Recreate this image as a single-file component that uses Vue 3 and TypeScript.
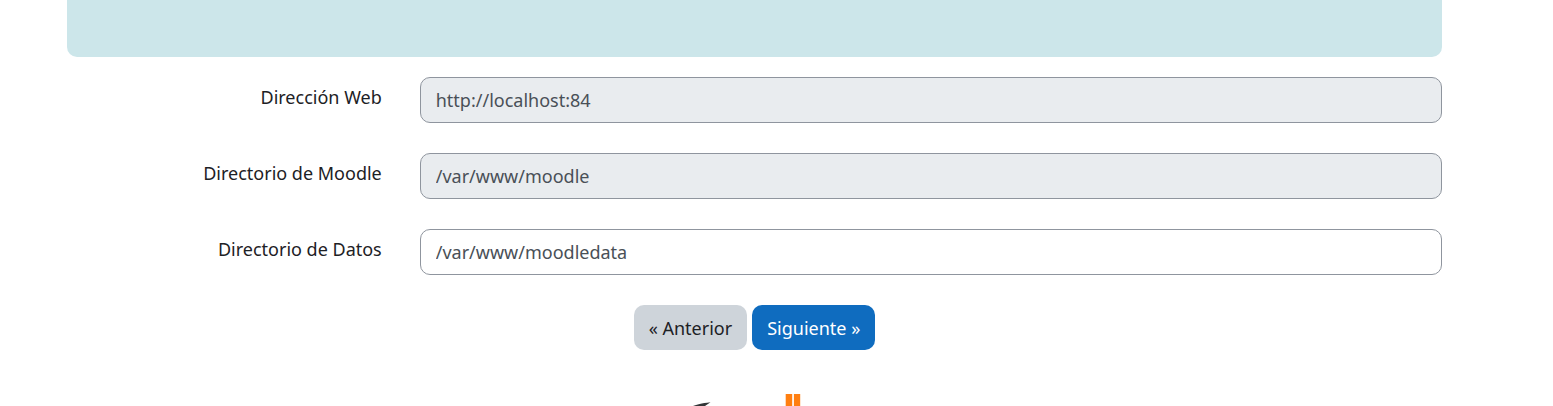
<script setup lang="ts">
import { reactive } from 'vue'

interface Field {
  id: string
  label: string
  value: string
  locked: boolean
}

const fields = reactive<Field[]>([
  { id: 'wwwroot', label: 'Dirección Web', value: 'http://localhost:84', locked: true },
  { id: 'dirroot', label: 'Directorio de Moodle', value: '/var/www/moodle', locked: true },
  { id: 'dataroot', label: 'Directorio de Datos', value: '/var/www/moodledata', locked: false },
])
</script>

<template>
  <main class="page">
    <div class="notice"></div>
    <form class="form" @submit.prevent>
      <div v-for="field in fields" :key="field.id" class="row">
        <label class="label" :for="field.id">{{ field.label }}</label>
        <input :id="field.id" v-model="field.value" class="control" type="text" :disabled="field.locked" spellcheck="false" />
      </div>
      <div class="actions">
        <button class="btn secondary" type="button">« Anterior</button>
        <button class="btn primary" type="submit">Siguiente »</button>
      </div>
    </form>
    <footer class="footer">
      <svg class="logo" viewBox="0 0 200 12" width="200" height="12" aria-hidden="true">
        <path d="M38 12 C42 10.500 46 9.300 55.500 8.300 L50 12 Z" fill="#333638" />
        <path d="M130.700 0H137.200V12H130.700ZM138.900 0H145.200V12H138.900Z" fill="#ff7f11" />
      </svg>
    </footer>
  </main>
</template>

<style>
body {
  margin: 0;
  background: #fff;
}
</style>

<style scoped>
.page {
  padding: 0 111px 0 67px;
  color: #1d2125;
  font-family: "Segoe UI", "Noto Sans", sans-serif;
  font-size: 18px;
  line-height: 28px;
}

.notice {
  height: 57px;
  border-radius: 0 0 10px 10px;
  background: #cce6ea;
}

.form {
  display: grid;
  row-gap: 30px;
  padding-top: 20px;
}

.row {
  display: grid;
  grid-template-columns: calc(25% - 29px) 1fr;
  column-gap: 38px;
  align-items: start;
}

.label {
  padding-top: 6px;
  text-align: right;
}

.control {
  box-sizing: border-box;
  width: 100%;
  height: 46px;
  margin: 0;
  padding: 8px 15px;
  border: 1px solid #8f959e;
  border-radius: 10px;
  background: #fff;
  color: #495057;
  font: inherit;
}

.control:disabled {
  background: #e9ecef;
  opacity: 1;
}

.actions {
  display: flex;
  justify-content: center;
  gap: 5px;
}

.btn {
  height: 45px;
  margin: 0;
  padding: 0 15px;
  border: 0;
  border-radius: 10px;
  font: inherit;
  cursor: pointer;
}

.secondary {
  background: #ced4da;
  color: #1d2125;
}

.primary {
  background: #0f6cbf;
  color: #fff;
}

.footer {
  display: flex;
  justify-content: center;
  padding-top: 44px;
}

.logo {
  display: block;
}
</style>
